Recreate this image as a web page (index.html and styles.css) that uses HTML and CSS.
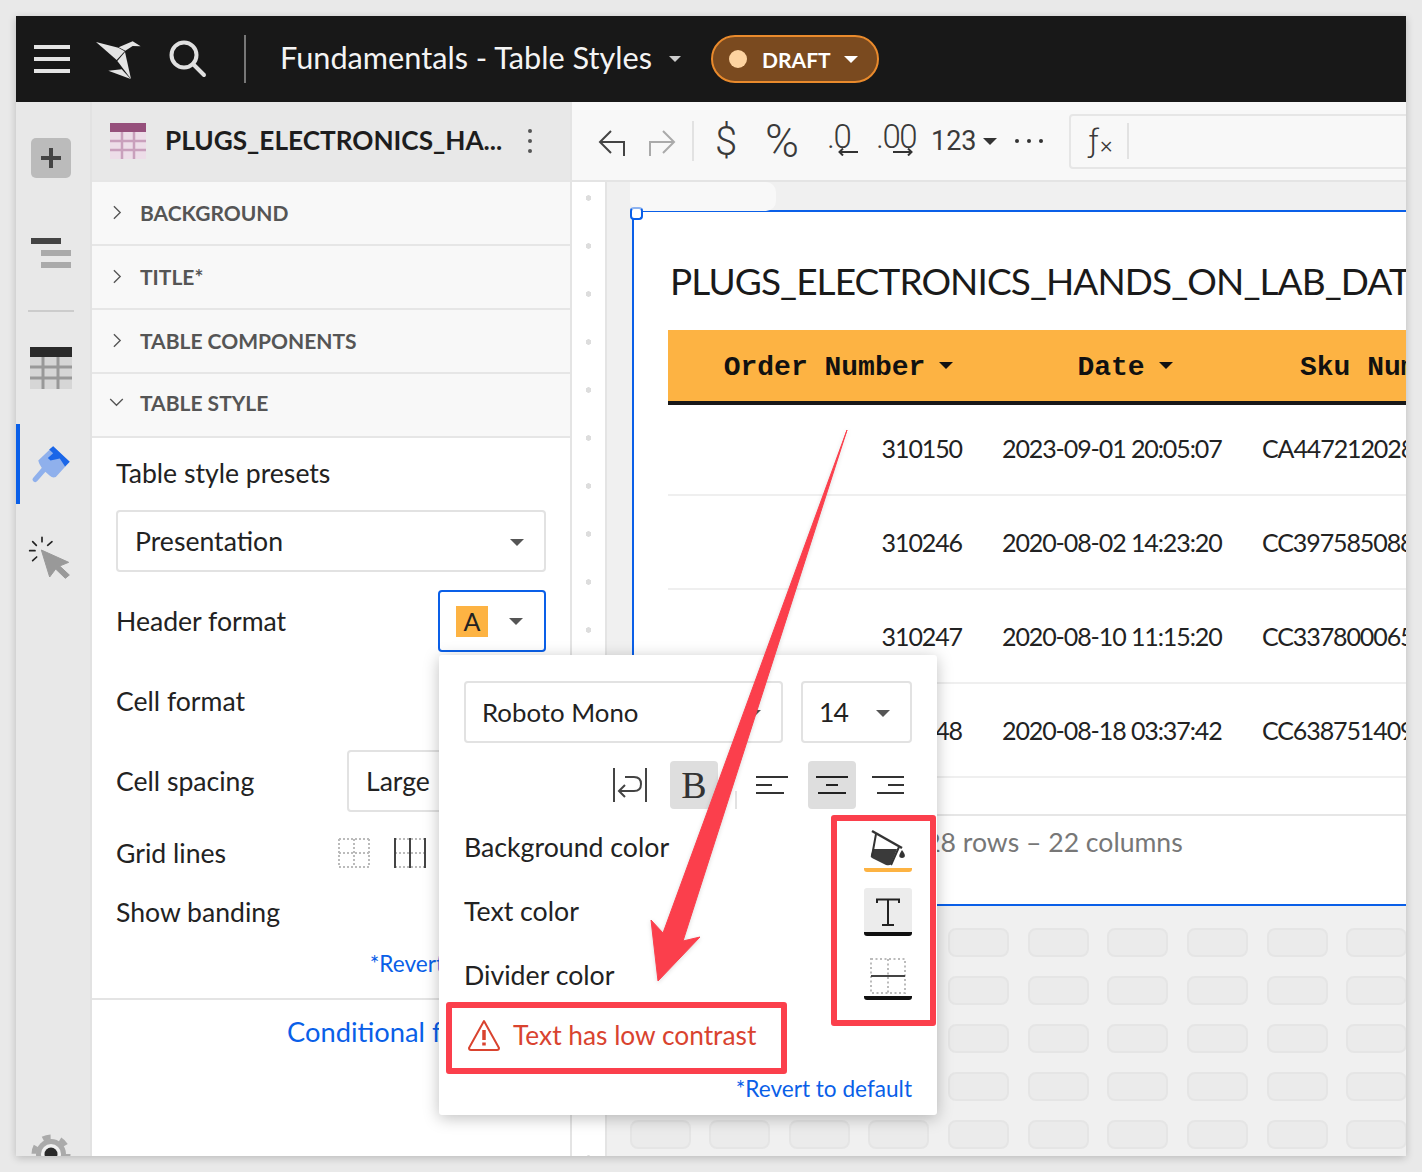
FILE: index.html
```html
<!DOCTYPE html>
<html lang="en">
<head>
  <meta charset="UTF-8" />
  <title>Fundamentals - Table Styles</title>
  <link rel="stylesheet" href="styles.css">
</head>
<body>
<div class="app">

  <!-- TOP BAR -->
  <header class="topbar">
    <div class="burger"><span></span><span></span><span></span></div>
    <svg class="logo" viewBox="0 0 180 165">
      <path d="M18 30 L85 47 L104 58 L80 84 Z" fill="#e4e4e4"/>
      <path d="M105 60 L82 87 L123 141 Z" fill="#e4e4e4"/>
      <path d="M86 46 L128 28 L152 43 L128 42 L106 56 Z" fill="#e4e4e4"/>
      <path d="M55 116 L95 112 L122 141 Z" fill="#e4e4e4"/>
    </svg>
    <svg class="search" viewBox="0 0 38 38" fill="none" stroke="#e0e0e0" stroke-width="4" stroke-linecap="round">
      <circle cx="15" cy="15" r="12.5"/><path d="M24 24 L35 35"/>
    </svg>
    <div class="top-sep"></div>
    <div class="doc-title">Fundamentals - Table Styles</div>
    <span class="caret caret-light doc-caret"></span>
    <div class="draft"><span class="draft-dot"></span>DRAFT<span class="caret caret-white"></span></div>
  </header>

  <div class="main">

    <!-- ICON RAIL -->
    <aside class="rail">
      <div class="rail-add"><svg viewBox="0 0 24 24" width="24" height="24"><path d="M10 2h4v8h8v4h-8v8h-4v-8H2v-4h8z" fill="#444"/></svg></div>
      <div class="rail-outline"><span></span><span></span><span></span></div>
      <div class="rail-sep"></div>
      <svg class="rail-table" viewBox="0 0 42 42" width="42" height="42">
        <rect width="42" height="42" fill="#d6d6d6"/>
        <rect width="42" height="10" fill="#2a2a2a"/>
        <path d="M0 20h42M0 31h42M13 10v32M28 10v32" stroke="#999" stroke-width="3"/>
      </svg>
      <div class="rail-active">
        <svg viewBox="30 325 130 130" width="43" height="43">
          <path d="M72 405L46 435" stroke="#8fb0ec" stroke-width="16" stroke-linecap="round"/>
          <path d="M55 378L100 335 150 382 108 428Q98 432 90 424L72 408Q58 392 55 378Z" fill="#8fb0ec"/>
          <path d="M100 335L150 382 136 396 120 372 92 378 84 370 100 356 88 345Z" fill="#1a66e8"/>
        </svg>
      </div>
      <svg class="rail-cursor" viewBox="80 405 135 135" width="45" height="45">
        <path d="M123 450 L205 487 L178 498 L207 525 L195 535 L166 507 L148 531Z" fill="#999" stroke="#999" stroke-width="3" stroke-linejoin="round"/>
        <path d="M125 412v13M97 425l11 11M88 452h16M97 482l12-11M155 425l-13 11" stroke="#222" stroke-width="5" stroke-linecap="round"/>
      </svg>
      <svg class="rail-gear" viewBox="0 0 40 40" width="40" height="40">
        <circle cx="20" cy="20" r="15" fill="#aaa"/>
        <circle cx="20" cy="20" r="17" fill="none" stroke="#aaa" stroke-width="5" stroke-dasharray="8 9.8"/>
        <circle cx="20" cy="20" r="10" fill="#f0f0f0"/>
        <circle cx="20" cy="20" r="6.5" fill="#2a2a2a"/>
      </svg>
    </aside>

    <!-- PROPERTIES PANEL -->
    <section class="panel">
      <div class="panel-head">
        <svg viewBox="0 0 36 36" width="36" height="36">
          <rect width="36" height="36" fill="#eddde8"/>
          <rect width="36" height="9" fill="#96507c"/>
          <path d="M0 18h36M0 27h36M12 9v27M24 9v27" stroke="#c9a0bc" stroke-width="2.5"/>
        </svg>
        <div class="panel-title">PLUGS_ELECTRONICS_HA...</div>
        <div class="kebab"><span></span><span></span><span></span></div>
      </div>

      <div class="acc"><svg class="chev" viewBox="0 0 10 16"><path d="M1 1l7 7-7 7"/></svg>BACKGROUND</div>
      <div class="acc"><svg class="chev" viewBox="0 0 10 16"><path d="M1 1l7 7-7 7"/></svg>TITLE*</div>
      <div class="acc"><svg class="chev" viewBox="0 0 10 16"><path d="M1 1l7 7-7 7"/></svg>TABLE COMPONENTS</div>
      <div class="acc acc-open"><svg class="chev-down" viewBox="0 0 16 10"><path d="M1 1l7 7 7-7"/></svg>TABLE STYLE</div>

      <div class="form">
        <div class="form-label">Table style presets</div>
        <div class="select">Presentation<span class="caret"></span></div>
        <div class="row">
          <span>Header format</span>
          <div class="fmt-btn"><span class="swatch">A</span><span class="caret"></span></div>
        </div>
        <div class="row"><span>Cell format</span></div>
        <div class="row">
          <span>Cell spacing</span>
          <div class="select spacing">Large</div>
        </div>
        <div class="row row-grid">
          <span>Grid lines</span>
          <div class="grid-opts">
            <svg viewBox="0 0 32 30" width="32" height="30" fill="none" stroke="#bbb" stroke-width="2" stroke-dasharray="2 2">
              <path d="M1 1h30M1 15h30M1 29h30M1 1v28M16 1v28M31 1v28"/>
            </svg>
            <svg viewBox="0 0 32 30" width="32" height="30" fill="none">
              <path d="M1 1h30M1 15h30M1 29h30" stroke="#bbb" stroke-width="2" stroke-dasharray="2 2"/>
              <path d="M1 0v30M16 0v30M31 0v30" stroke="#444" stroke-width="2"/>
            </svg>
          </div>
        </div>
        <div class="row row-band"><span>Show banding</span></div>
        <div class="revert">*Revert to default</div>
      </div>
      <div class="cond">Conditional formatting</div>
    </section>

    <!-- WORKSPACE -->
    <section class="work">
      <div class="toolbar">
        <svg class="tb-undo" viewBox="0 0 28 28" fill="none" stroke="#444" stroke-width="2"><path d="M13 3L2 14l11 11M2 14h24v14"/></svg>
        <svg class="tb-redo" viewBox="0 0 28 28" fill="none" stroke="#aaa" stroke-width="2"><path d="M15 3l11 11-11 11M26 14H2v14"/></svg>
        <div class="tb-sep"></div>
        <span class="tb-sym tb-dollar">$</span>
        <span class="tb-sym tb-pct">%</span>
        <div class="tb-dec tb-dec1">.0<svg viewBox="0 0 20 8" width="20" height="8"><path d="M20 4H2M5 0.5L1.500 4 5 7.500" fill="none" stroke="#333" stroke-width="2"/></svg></div>
        <div class="tb-dec tb-dec2">.00<svg viewBox="0 0 20 8" width="20" height="8"><path d="M0 4h18M15 0.500L18.500 4 15 7.500" fill="none" stroke="#333" stroke-width="2"/></svg></div>
        <span class="tb-num">123</span><span class="caret tb-caret"></span>
        <div class="tb-more"><span></span><span></span><span></span></div>
        <div class="fx"><span class="fx-f">ƒ</span><span class="fx-x">×</span><div class="fx-sep"></div></div>
      </div>

      <div class="canvas">
        <div class="ruler"></div>
        <div class="stage">
          <div class="card">
            <h1 class="card-title">PLUGS_ELECTRONICS_HANDS_ON_LAB_DATA</h1>
            <table class="data">
              <thead>
                <tr>
                  <th class="col-a"><span>Order Number</span><i class="caret caret-dark"></i></th>
                  <th class="col-b"><span>Date</span><i class="caret caret-dark"></i></th>
                  <th class="col-c"><span>Sku Number</span></th>
                </tr>
              </thead>
              <tbody>
                <tr><td class="num">310150</td><td>2023-09-01 20:05:07</td><td class="sku">CA4472120286</td></tr>
                <tr><td class="num">310246</td><td>2020-08-02 14:23:20</td><td class="sku">CC3975850886</td></tr>
                <tr><td class="num">310247</td><td>2020-08-10 11:15:20</td><td class="sku">CC3378000657</td></tr>
                <tr><td class="num">310248</td><td>2020-08-18 03:37:42</td><td class="sku">CC6387514098</td></tr>
              </tbody>
            </table>
            <div class="card-foot">1,000,028 rows – 22 columns</div>
          </div>
          <div class="cells">
            <b></b><b></b><b></b><b></b><b></b><b></b><b></b><b></b><b></b><b></b>
            <b></b><b></b><b></b><b></b><b></b><b></b><b></b><b></b><b></b><b></b>
            <b></b><b></b><b></b><b></b><b></b><b></b><b></b><b></b><b></b><b></b>
            <b></b><b></b><b></b><b></b><b></b><b></b><b></b><b></b><b></b><b></b>
            <b></b><b></b><b></b><b></b><b></b><b></b><b></b><b></b><b></b><b></b>
          </div>
          <div class="el-tab"></div>
          <div class="el-handle"></div>
        </div>
      </div>
    </section>
  </div>

  <!-- HEADER FORMAT POPOVER -->
  <div class="pop">
    <div class="pop-fonts">
      <div class="select font-sel">Roboto Mono<span class="caret"></span></div>
      <div class="select size-sel">14<span class="caret"></span></div>
    </div>
    <div class="pop-align">
      <svg class="ic-wrap" viewBox="0 0 34 36" fill="none" stroke="#444" stroke-width="2">
        <path d="M1 1v34M33 1v34"/><path d="M7 24h14q7 0 7-7t-7-7H12M12 18l-6 6 6 6"/>
      </svg>
      <div class="al-btn on bold">B</div>
      <div class="al-sep"></div>
      <div class="al-btn">
        <svg viewBox="0 0 32 18" width="32" height="18" stroke="#333" stroke-width="2"><path d="M0 1h32M0 9h16M0 17h28"/></svg>
      </div>
      <div class="al-btn on al-mid">
        <svg viewBox="0 0 32 18" width="32" height="18" stroke="#222" stroke-width="2"><path d="M0 1h32M10 9h12M2 17h28"/></svg>
      </div>
      <div class="al-btn al-end">
        <svg viewBox="0 0 32 18" width="32" height="18" stroke="#333" stroke-width="2"><path d="M0 1h32M16 9h16M5 17h27"/></svg>
      </div>
    </div>
    <div class="pop-row">
      <span>Background color</span>
      <div class="col-btn bar-orange">
        <svg viewBox="0 0 48 44" width="48" height="44">
          <path d="M8 7L38 24" stroke="#333" stroke-width="2.500"/>
          <path d="M9 25L33 25 27 40Q26 42 22 41L8 34Q6 33 7 31Z" fill="#3a3a3a"/>
          <path d="M12 10L8 32M35 23L27 41" stroke="#333" stroke-width="2"/>
          <path d="M38 26q4 5 2.500 7-2.500 2-5 0-1-2 2.500-7z" fill="#333"/>
        </svg>
      </div>
    </div>
    <div class="pop-row">
      <span>Text color</span>
      <div class="col-btn bar-black shade">
        <svg viewBox="0 0 48 44" width="48" height="44" fill="none" stroke="#222" stroke-width="2">
          <path d="M13 15v-3.500h22V15M24 11v26M18 37h12"/>
        </svg>
      </div>
    </div>
    <div class="pop-row">
      <span>Divider color</span>
      <div class="col-btn bar-black">
        <svg viewBox="0 0 48 44" width="48" height="44" fill="none">
          <path d="M7 7h34v34H7zM24 7v34" stroke="#bbb" stroke-width="2" stroke-dasharray="2 2.500"/>
          <path d="M7 24h34" stroke="#444" stroke-width="2"/>
        </svg>
      </div>
    </div>
    <div class="warn">
      <svg viewBox="0 0 34 32" width="34" height="32" fill="none" stroke="#d9432f" stroke-width="2" stroke-linejoin="round">
        <path d="M17 2L32 29Q32 31 30 31H4Q2 31 2 29Z"/>
        <path d="M17 11v10M17 23.500v3" stroke-width="3.500"/>
      </svg>
      <span>Text has low contrast</span>
    </div>
    <div class="pop-revert">*Revert to default</div>
  </div>

  <!-- ANNOTATIONS -->
  <svg class="arrow" viewBox="0 0 400 600" width="400" height="600">
    <path d="M370 0 L206 511 L223 507 L181 551 L174 490 L186 503Z" fill="#fb3f4c" stroke="#fb3f4c" stroke-width="1" stroke-linejoin="round"/>
  </svg>
  <div class="mark mark-warn"></div>
  <div class="mark mark-cols"></div>
</div>
</body>
</html>
```

FILE: styles.css
```css
* {
  box-sizing: border-box;
}

body {
  margin: 0;
  padding: 16px;
  background: #e9e9e9;
  font-family: 'Lato', 'Noto Sans', sans-serif;
  color: #222;
}

.app {
  position: relative;
  width: 1390px;
  height: 1140px;
  overflow: hidden;
  display: flex;
  flex-direction: column;
  box-shadow: 0 2px 8px rgba(0, 0, 0, 0.2);
}

/* carets */
.caret {
  display: inline-block;
  width: 0;
  height: 0;
  border-left: 7px solid transparent;
  border-right: 7px solid transparent;
  border-top: 7px solid #555;
}

.caret-light { border-top-color: #ccc; }
.caret-white { border-top-color: #fff; }
.caret-dark { border-top-color: #111; }

/* top bar */
.topbar {
  height: 86px;
  flex: none;
  display: flex;
  align-items: center;
  background: #181818;
  padding-left: 18px;
}

.burger {
  width: 36px;
  display: flex;
  flex-direction: column;
  gap: 8px;
}

.burger span {
  height: 4px;
  background: #e4e4e4;
}

.logo {
  width: 60px;
  height: 55px;
  margin-left: 20px;
}

.search {
  width: 38px;
  height: 38px;
  margin-left: 19px;
}

.top-sep {
  width: 2px;
  height: 48px;
  background: #777;
  margin-left: 37px;
}

.doc-title {
  margin-left: 34px;
  padding-bottom: 3px;
  font-size: 30.7px;
  color: #f4f4f4;
  white-space: nowrap;
}

.doc-caret {
  margin-left: 17px;
  border-left-width: 6px;
  border-right-width: 6px;
  border-top-width: 6px;
}

.draft {
  margin-left: 30px;
  width: 168px;
  height: 48px;
  display: flex;
  align-items: center;
  padding-left: 16px;
  border: 2px solid #e98a2c;
  border-radius: 24px;
  background: #7a4a1f;
  color: #fff;
  font-size: 21px;
  font-weight: 700;
}

.draft-dot {
  width: 18px;
  height: 18px;
  border-radius: 50%;
  background: #fdd3a0;
  margin-right: 15px;
}

.draft .caret {
  margin-left: 13px;
}

.main {
  flex: 1;
  display: flex;
  min-height: 0;
}

/* icon rail */
.rail {
  width: 76px;
  flex: none;
  display: flex;
  flex-direction: column;
  overflow: hidden;
  background: #e8e8e8;
  border-right: 2px solid #e2e2e2;
}

.rail-add {
  width: 40px;
  height: 40px;
  margin: 36px 0 0 15px;
  display: flex;
  align-items: center;
  justify-content: center;
  background: #bbb;
  border-radius: 5px;
}

.rail-outline {
  width: 40px;
  margin: 60px 0 0 15px;
  display: flex;
  flex-direction: column;
  gap: 6px;
}

.rail-outline span {
  height: 6px;
  margin-left: 10px;
  background: #aaa;
}

.rail-outline span:first-child {
  margin: 0 10px 0 0;
  background: #444;
}

.rail-sep {
  width: 46px;
  height: 2px;
  margin: 42px 0 0 12px;
  background: #ccc;
}

.rail-table {
  margin: 35px 0 0 14px;
}

.rail-active {
  height: 80px;
  margin-top: 35px;
  padding: 19px 0 0 10px;
  border-left: 4px solid #0a5fe8;
}

.rail-cursor {
  margin: 31px 0 0 11px;
}

.rail-gear {
  margin: auto 0 -18px 15px;
}

/* panel */
.panel {
  width: 480px;
  flex: none;
  background: #fff;
  border-right: 2px solid #e4e4e4;
}

.panel-head {
  height: 78px;
  display: flex;
  align-items: center;
  padding-left: 18px;
  background: #e8e8e8;
}

.panel-title {
  margin-left: 19px;
  padding-bottom: 2px;
  font-size: 26.2px;
  font-weight: 700;
  color: #1d1d1d;
  white-space: nowrap;
}

.kebab {
  margin-left: 26px;
  display: flex;
  flex-direction: column;
  gap: 6px;
}

.kebab span {
  width: 4px;
  height: 4px;
  border-radius: 50%;
  background: #555;
}

.acc {
  height: 64px;
  display: flex;
  align-items: center;
  padding: 0 0 2px 21px;
  background: #f8f8f8;
  border-top: 2px solid #e6e6e6;
  font-size: 21px;
  font-weight: 700;
  color: #555;
}

.acc-open {
  border-bottom: 2px solid #e6e6e6;
  height: 66px;
  padding-bottom: 6px;
}

.chev {
  width: 9px;
  height: 15px;
  margin-right: 18px;
  fill: none;
  stroke: #555;
  stroke-width: 1.5;
}

.chev-down {
  width: 15px;
  height: 9px;
  margin: 0 16px 0 -4px;
  fill: none;
  stroke: #555;
  stroke-width: 1.5;
}

.form {
  height: 562px;
  padding: 0 24px;
  border-bottom: 2px solid #e4e4e4;
  font-size: 26.6px;
}

.form-label {
  height: 72px;
  display: flex;
  align-items: center;
  padding-bottom: 3px;
}

.select {
  position: relative;
  height: 62px;
  display: flex;
  align-items: center;
  padding-left: 17px;
  background: #fff;
  border: 2px solid #e2e2e2;
  border-radius: 4px;
  font-size: 26.6px;
}

.select .caret {
  position: absolute;
  right: 20px;
  top: 27px;
}

.row {
  height: 62px;
  margin-top: 18px;
  display: flex;
  align-items: center;
  justify-content: space-between;
}

.fmt-btn {
  width: 108px;
  height: 62px;
  display: flex;
  align-items: center;
  padding-left: 16px;
  border: 2px solid #0a5fe8;
  border-radius: 4px;
}

.swatch {
  width: 32px;
  height: 31px;
  display: flex;
  align-items: center;
  justify-content: center;
  background: #fdb343;
  font-size: 25px;
}

.fmt-btn .caret {
  margin-left: 21px;
}

.spacing {
  width: 199px;
}

.row-grid {
  height: 46px;
}

.grid-opts {
  display: flex;
  gap: 24px;
  margin-right: 120px;
}

.row-band {
  margin-top: 7px;
  height: 58px;
}

.revert {
  margin-top: 9px;
  font-size: 22.6px;
  color: #0a5fe8;
  text-align: right;
}

.cond {
  padding: 15px 0 0 195px;
  font-size: 27.3px;
  color: #0a5fe8;
  white-space: nowrap;
}

/* workspace */
.work {
  flex: 1;
  min-width: 0;
  display: flex;
  flex-direction: column;
}

.toolbar {
  height: 78px;
  flex: none;
  display: flex;
  align-items: center;
  overflow: hidden;
  background: #f8f8f8;
  padding-left: 26px;
  color: #3a3a3a;
  font-family: 'Roboto', sans-serif;
  font-weight: 300;
}

.toolbar > * {
  flex: none;
}

.tb-undo, .tb-redo {
  width: 28px;
  height: 28px;
  margin-top: 2px;
}

.tb-redo {
  margin-left: 22px;
}

.tb-sep {
  width: 2px;
  height: 40px;
  margin-left: 16px;
  background: #e2e2e2;
}

.tb-sym {
  font-size: 40px;
  text-align: center;
}

.tb-dollar {
  width: 24px;
  margin-left: 20px;
}

.tb-pct {
  width: 40px;
  margin-left: 24px;
  font-size: 46px;
}

.tb-dec {
  position: relative;
  height: 40px;
  font-size: 33px;
  line-height: 32px;
  letter-spacing: -1.5px;
}

.tb-dec svg {
  position: absolute;
  top: 27px;
}

.tb-dec1 {
  width: 32px;
  margin-left: 25px;
}

.tb-dec1 svg {
  left: 11px;
}

.tb-dec2 {
  width: 38px;
  margin-left: 17px;
}

.tb-dec2 svg {
  left: 17px;
}

.tb-num {
  margin-left: 17px;
  font-size: 27px;
  font-weight: 400;
}

.tb-caret {
  margin-left: 6px;
  border-top-color: #333;
}

.tb-more {
  margin-left: 18px;
  display: flex;
  gap: 8px;
}

.tb-more span {
  width: 4px;
  height: 4px;
  border-radius: 50%;
  background: #333;
}

.fx {
  width: 500px;
  height: 55px;
  margin-left: 26px;
  display: flex;
  align-items: center;
  padding-left: 18px;
  border: 2px solid #e6e6e6;
  border-radius: 4px;
}

.fx-f {
  font-size: 32px;
}

.fx-x {
  margin: 8px 0 0 1px;
  font-size: 24px;
}

.fx-sep {
  width: 2px;
  height: 36px;
  margin-left: 14px;
  background: #e2e2e2;
}

.canvas {
  flex: 1;
  min-height: 0;
  display: flex;
  border-top: 2px solid #e4e4e4;
}

.ruler {
  width: 35px;
  flex: none;
  background-color: #fff;
  background-image: radial-gradient(circle, #ddd 2.500px, transparent 3px);
  background-size: 33px 48px;
  background-repeat: repeat-y;
  background-position: 0 -8px;
  border-right: 2px solid #e4e4e4;
}

.stage {
  position: relative;
  flex: 1;
  min-width: 0;
  overflow: hidden;
  padding-top: 28px;
  background: #f0f0f0;
}

.card {
  width: 1000px;
  height: 696px;
  margin-left: 25px;
  background: #fff;
  border: 2px solid #0a5fe8;
  padding: 0 0 0 34px;
}

.card-title {
  height: 118px;
  margin: 0;
  padding: 47px 0 0 2px;
  font-size: 37px;
  letter-spacing: -0.9px;
  line-height: 44px;
  font-weight: 400;
  color: #1a1a1a;
  white-space: nowrap;
}

.data {
  width: 900px;
  table-layout: fixed;
  border-collapse: collapse;
  font-size: 25px;
  letter-spacing: -1.1px;
  color: #222;
}

.data th {
  height: 73px;
  padding: 4px 0 0 28px;
  background: #fdb343;
  border-bottom: 4px solid #181818;
  font-family: 'Liberation Mono', monospace;
  font-size: 28px;
  letter-spacing: 0;
  font-weight: 700;
  color: #111;
  white-space: nowrap;
}

.data th .caret {
  margin: 0 0 5px 14px;
  vertical-align: middle;
}

.col-a { width: 313px; }
.col-b { width: 260px; }

.data th.col-c {
  text-align: left;
  padding-left: 59px;
}

.data td {
  height: 94px;
  padding: 0 0 1px 21px;
  border-bottom: 2px solid #efefef;
  white-space: nowrap;
}

.data tbody tr:first-child td {
  height: 92px;
  padding-bottom: 3px;
}

.data td.num {
  padding-right: 19px;
  padding-left: 0;
  text-align: right;
}

.data td.sku {
  overflow: hidden;
}

.card-foot {
  margin-top: 36px;
  padding: 10px 0 0 168px;
  border-top: 2px solid #e6e6e6;
  font-size: 26.6px;
  color: #777;
}

.cells {
  display: grid;
  grid-template-columns: repeat(10, 61px);
  grid-auto-rows: 29px;
  column-gap: 18.67px;
  row-gap: 19px;
  margin: 22px 0 0 22.5px;
}

.cells b {
  background: #ebebeb;
  border: 2px solid #e5e5e5;
  border-radius: 8px;
}

.el-tab {
  position: absolute;
  left: 23px;
  top: 0;
  width: 146px;
  height: 29px;
  background: #f8f8f8;
  border-radius: 0 10px 10px 10px;
}

.el-handle {
  position: absolute;
  left: 23px;
  top: 25px;
  width: 13px;
  height: 13px;
  background: #fff;
  border: 2px solid #0a5fe8;
  border-top-color: #8fb4f0;
  border-radius: 4px;
}

/* popover */
.pop {
  position: absolute;
  left: 423px;
  top: 639px;
  width: 498px;
  height: 460px;
  padding: 26px 25px 0;
  background: #fff;
  border-radius: 3px;
  box-shadow: 0 3px 16px rgba(0, 0, 0, 0.25);
  font-size: 26.7px;
}

.pop-fonts {
  display: flex;
  gap: 18px;
}

.font-sel {
  width: 319px;
  padding-left: 16px;
  font-size: 25.8px;
}

.size-sel {
  width: 111px;
  padding-left: 16px;
  letter-spacing: -1px;
}

.pop-align {
  height: 72px;
  display: flex;
  align-items: center;
  justify-content: flex-end;
  padding-top: 12px;
}

.ic-wrap {
  width: 34px;
  height: 36px;
  margin-right: 23px;
}

.al-btn {
  width: 48px;
  height: 48px;
  display: flex;
  align-items: center;
  justify-content: center;
  border-radius: 4px;
}

.al-btn.on {
  background: #dedede;
}

.al-mid {
  margin-left: 12px;
}

.al-end {
  margin-left: 8px;
}

.bold {
  font-family: 'Liberation Serif', serif;
  font-size: 38px;
  color: #333;
}

.al-sep {
  width: 2px;
  height: 18px;
  margin: 30px 11px 0 17px;
  background: #e2e2e2;
}

.pop-row {
  height: 64px;
  display: flex;
  align-items: center;
  justify-content: space-between;
}

.col-btn {
  width: 48px;
  height: 48px;
  margin-top: 2px;
  border-radius: 3px;
  border-bottom: 4px solid #111;
}

.col-btn svg {
  display: block;
}

.bar-orange { border-bottom-color: #fdb343; }
.shade { background: #ececec; }

.warn {
  height: 60px;
  margin-top: -2px;
  display: flex;
  align-items: center;
  gap: 12px;
  padding-left: 3px;
  font-size: 26.300px;
  color: #d9432f;
}

.pop-revert {
  margin-top: 10px;
  font-size: 22.6px;
  color: #0a5fe8;
  text-align: right;
}

/* annotations */
.arrow {
  position: absolute;
  left: 461px;
  top: 414px;
  filter: drop-shadow(0 1px 2px rgba(0, 0, 0, 0.15));
}

.mark {
  position: absolute;
  border: 6px solid #fb3f4c;
  border-radius: 3px;
}

.mark-warn {
  left: 430px;
  top: 986px;
  width: 341px;
  height: 72px;
}

.mark-cols {
  left: 815px;
  top: 799px;
  width: 105px;
  height: 211px;
}
```
